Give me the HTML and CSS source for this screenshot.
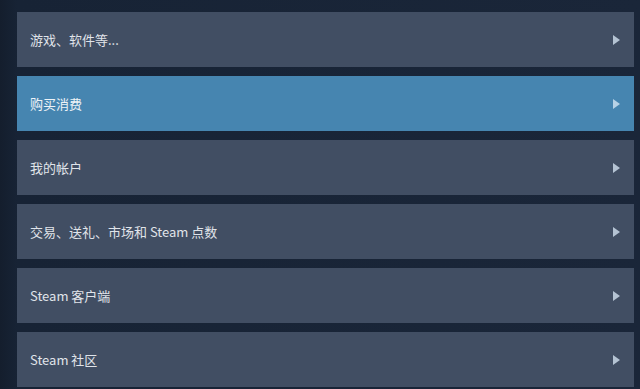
FILE: index.html
```html
<!DOCTYPE html>
<html lang="zh-CN">
<head>
<meta charset="utf-8">
<link rel="stylesheet" href="styles.css">
</head>
<body>
<div class="page">
  <div class="list">
    <div class="item"><span class="label">游戏、软件等...</span><span class="arrow"></span></div>
    <div class="item active"><span class="label">购买消费</span><span class="arrow"></span></div>
    <div class="item"><span class="label">我的帐户</span><span class="arrow"></span></div>
    <div class="item"><span class="label">交易、送礼、市场和 Steam 点数</span><span class="arrow"></span></div>
    <div class="item"><span class="label">Steam 客户端</span><span class="arrow"></span></div>
    <div class="item"><span class="label">Steam 社区</span><span class="arrow"></span></div>
  </div>
</div>
</body>
</html>
```

FILE: styles.css
```css
html, body {
  margin: 0;
  padding: 0;
  background: #172233;
}
body {
  width: 640px;
  height: 389px;
  overflow: hidden;
  font-family: "Noto Sans CJK SC", "Noto Sans", sans-serif;
}
.page {
  padding: 12px 6px 0 17px;
  background: linear-gradient(90deg, #141e2d 0px, #172335 17px, #1a2639 100%);
  height: 389px;
  box-sizing: border-box;
}
.list {
  display: flex;
  flex-direction: column;
  gap: 9px;
}
.item {
  height: 55px;
  background: #414e63;
  display: flex;
  align-items: center;
  justify-content: space-between;
  padding: 0 14px 0 13px;
  color: #e0e4ea;
  font-size: 13px;
  flex-shrink: 0;
}
.item.active {
  background: #4685b0;
  color: #eef3f7;
}
.arrow {
  width: 0;
  height: 0;
  border-top: 5px solid transparent;
  border-bottom: 5px solid transparent;
  border-left: 7px solid #b4c3d3;
}
.item.active .arrow {
  border-left-color: #b7d2e6;
}
```
